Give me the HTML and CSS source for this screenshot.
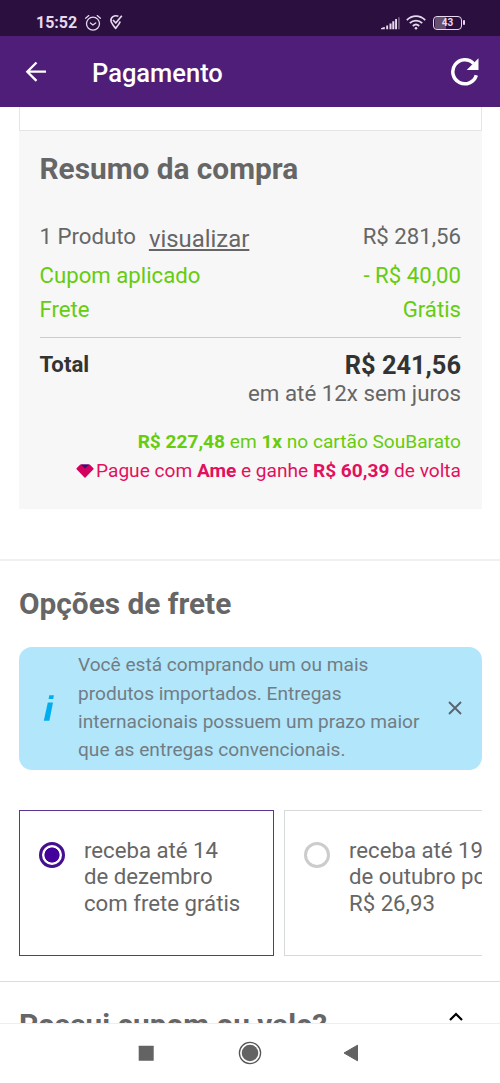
FILE: index.html
```html
<!DOCTYPE html>
<html lang="pt-BR">
<head>
<meta charset="utf-8">
<title>Pagamento</title>
<link rel="stylesheet" href="styles.css">
</head>
<body>
<div class="phone">
  <div class="status">
    <span class="clock">15:52</span>
    <svg class="alarm" width="18" height="18" viewBox="0 0 18 18" fill="none" stroke="#e6d9ee" stroke-width="1.3" stroke-linecap="round"><circle cx="9" cy="9.7" r="6.5"/><path d="M1.6 4.2 4.8 1.6M16.4 4.2 13.2 1.6M6.4 9l2.5 2 2.8-2"/></svg>
    <svg class="check" width="14" height="18" viewBox="0 0 14 18" fill="none" stroke="#e6d9ee" stroke-width="1.7" stroke-linejoin="round"><path d="M9.4 2.2C5.2.8 1.5 3.1 2 7c.3 2.200 2.200 4.300 4.700 7.400 2-2.600 3.800-4.700 4.500-6.900M4 6l2.800 3 6-7.300"/></svg>
    <span class="spacer"></span>
    <svg class="signal" width="20" height="14" viewBox="0 0 20 14" fill="#e6d9ee"><path d="M0 13.200v-1L3 11h.8v2.200H0zM5.200 9.500h1.900v3.700H5.200zM8.500 7.400h2v5.800h-2zM11.300 5.200h2v8h-2zM14.100 3.100h1.900v10.100h-1.900z"/><path opacity=".35" d="M17 1.300h1.800v11.900H17z"/></svg>
    <svg class="wifi" width="20" height="15" viewBox="0 0 20 15" fill="none" stroke="#e6d9ee" stroke-width="1.800"><path d="M.8 5.100C6-.2 14-.2 19.200 5.100M3.800 8.200c3.500-3.500 8.900-3.500 12.400 0M6.800 11c1.900-1.800 4.500-1.800 6.400 0"/><circle cx="10" cy="13.200" r="1.300" fill="#e6d9ee" stroke="none"/></svg>
    <div class="battery"><span>43</span></div>
  </div>
  <header class="bar">
    <svg class="back" width="22" height="22" viewBox="0 0 22 22" fill="none" stroke="#fff" stroke-width="2.300"><path d="M21 10.700H2.500M11.500 1.500 2.300 10.700l9.200 9.200"/></svg>
    <h1>Pagamento</h1>
    <svg class="reload" width="30" height="30" viewBox="0 0 30 30"><path d="M26.300 18.200A12 12 0 1 1 23.600 6.600" fill="none" stroke="#fff" stroke-width="3.500"/><path d="M28.500 1.200V13H16.700z" fill="#fff"/></svg>
  </header>
  <main class="content">
    <div class="stub"></div>
    <section class="summary">
      <h2>Resumo da compra</h2>
      <div class="row product"><span>1 Produto</span><a class="view">visualizar</a><span class="end">R$ 281,56</span></div>
      <div class="row coupon"><span>Cupom aplicado</span><span class="end">- R$ 40,00</span></div>
      <div class="row freight"><span>Frete</span><span class="end">Grátis</span></div>
      <div class="row total"><b class="label">Total</b><b class="end amount">R$ 241,56</b></div>
      <div class="parcel">em até 12x sem juros</div>
      <div class="offer card-offer"><b>R$ 227,48</b> em <b>1x</b> no cartão SouBarato</div>
      <div class="offer ame"><svg width="18" height="14" viewBox="0 0 18 14"><path d="M4.500 1.200h9l3.400 3.500L9 12.900 1.100 4.700z" fill="#d3005f" stroke="#d3005f" stroke-width="1.400" stroke-linejoin="round"/><path d="M4.800.5h8.400L9 4.500z" fill="#321178"/></svg><span>Pague com <b>Ame</b> e ganhe <b>R$ 60,39</b> de volta</span></div>
    </section>
    <section class="shipping">
      <h2>Opções de frete</h2>
      <div class="notice">
        <svg class="info" width="12" height="28" viewBox="0 0 12 28" fill="#00aeef"><path d="M6.300 1.300h4.600L10.200 5H5.600zM4.800 8.500h5.200L6.400 26.700H.8z"/></svg>
        <p>Você está comprando um ou mais<br>produtos importados. Entregas<br>internacionais possuem um prazo maior<br>que as entregas convencionais.</p>
        <svg class="close" width="14" height="14" viewBox="0 0 14 14" stroke="#5c6470" stroke-width="1.900"><path d="M1 1l12 12M13 1 1 13"/></svg>
      </div>
      <div class="options">
        <div class="option selected"><i class="radio"></i><p>receba até 14<br>de dezembro<br>com frete grátis</p></div>
        <div class="option"><i class="radio"></i><p>receba até 19<br>de outubro por<br>R$ 26,93</p></div>
      </div>
    </section>
    <section class="voucher">
      <h2>Possui cupom ou vale?</h2>
      <svg width="14" height="9" viewBox="0 0 14 9" fill="none" stroke="#000" stroke-width="2.200"><path d="M1 8 7 2l6 6"/></svg>
    </section>
  </main>
  <nav class="nav">
    <svg width="16" height="16" viewBox="0 0 16 16"><rect x=".7" y=".7" width="15" height="15" rx=".5" fill="#636363"/></svg>
    <svg width="24" height="24" viewBox="0 0 24 24"><circle cx="12" cy="12" r="10.600" fill="none" stroke="#555" stroke-width="1.300"/><circle cx="12" cy="12" r="8.300" fill="#636363"/></svg>
    <svg width="16" height="18" viewBox="0 0 16 18"><path d="M14.500 1.200v15.600L1 9z" fill="#636363" stroke="#636363" stroke-linejoin="round"/></svg>
  </nav>
</div>
</body>
</html>
```
FILE: styles.css
```css
* { box-sizing: border-box; margin: 0; padding: 0; }
body { font-family: Roboto, "Liberation Sans", sans-serif; color: #666; background: #fff; }
svg { display: block; flex: none; }
.phone { width: 500px; height: 1083px; display: grid; grid-template-rows: 36px 71px 916px 60px; overflow: hidden; }

.status { background: #2b103f; display: flex; align-items: center; padding: 9px 36px 0; color: #e6d9ee; }
.clock { font-size: 16px; font-weight: 700; line-height: 18px; width: 48px; }
.check { margin-left: 7px; }
.spacer { flex: 1; }
.signal { margin-right: -1px; }
.wifi { margin: 0 7px 0 6px; }
.battery { width: 29px; height: 14px; margin-right: 2px; border: 1.5px solid #e6d9ee; border-radius: 4px; font-size: 10px; font-weight: 700; line-height: 12px; text-align: center; position: relative; background: linear-gradient(90deg, #65506f 45%, transparent 45%); background-clip: content-box; padding: 0 1px; }
.battery::after { content: ""; position: absolute; right: -4px; top: 3px; width: 2px; height: 5px; background: #e6d9ee; border-radius: 1px; }

.bar { background: #4f1e78; display: flex; align-items: center; padding: 0 20px 0 25px; color: #fff; }
.bar h1 { flex: 1; margin-left: 45px; padding-top: 3px; font-size: 25.500px; font-weight: 500; line-height: 30px; }

.content { overflow: hidden; }
.content h2 { font-size: 29.800px; font-weight: 700; line-height: 34px; white-space: nowrap; }
.stub { height: 24px; margin: 0 18px 0 19px; border: solid #e5e5e5; border-width: 0 1px 1px; }
.summary { margin: 0 18px 0 19px; height: 378px; padding: 21px 21px 0 20.500px; background: #f7f7f7; font-size: 22.200px; }
.row { display: flex; white-space: nowrap; line-height: 34px; }
.end { margin-left: auto; }
.product { margin-top: 33px; height: 39px; }
.view { margin: 3px 0 0 13px; font-size: 23.900px; text-decoration: underline; text-decoration-thickness: 2px; text-underline-offset: 2px; }
.coupon, .freight { color: #66cc0e; }
.total { margin-top: 11px; padding-top: 10px; border-top: 1px solid #ccc; color: #333; }
.label { line-height: 32px; }
.amount { font-size: 25.400px; }
.parcel { text-align: right; line-height: 24px; margin-top: -1px; font-size: 22.300px; }
.offer { font-size: 19.100px; line-height: 28px; white-space: nowrap; }
.card-offer { margin-top: 23px; text-align: right; color: #66cc0e; }
.ame { display: flex; justify-content: flex-end; align-items: center; gap: 2px; margin-top: 1px; color: #e3105e; }

.shipping { margin-top: 50px; padding: 26px 18px 0 19px; border-top: 2px solid #f0f0f0; height: 422px; }
.notice { display: flex; align-items: center; height: 123px; margin-top: 25.500px; padding: 0 20px 0 24px; background: #b1e6fb; border-radius: 13px; color: #717d84; }
.notice p { flex: 1; margin-left: 23px; font-size: 19.100px; line-height: 28.300px; white-space: nowrap; }
.options { display: flex; gap: 10px; margin-top: 40.500px; overflow: hidden; }
.option { display: flex; flex: none; width: 255px; height: 146px; padding: 26px 0 0 19px; border: 1px solid #d6dadb; gap: 19px; font-size: 22.200px; line-height: 26.400px; white-space: nowrap; }
.selected { border-color: #5c3590; }
.radio { flex: none; width: 26px; height: 26px; margin-top: 5px; border: 3px solid #ccc; border-radius: 50%; }
.selected .radio { border-color: #43108f; background: radial-gradient(circle, #43009a 7.200px, transparent 7.900px); }
.voucher { display: flex; justify-content: space-between; padding: 26px 37px 0 19px; border-top: 1px solid #ddd; }
.voucher svg { margin-top: 4px; }

.nav { display: flex; align-items: center; border-top: 1px solid #eee; padding: 0 0 2px 138px; gap: 84px; background: #fff; }
.nav svg:last-child { margin-left: -3px; }
```
